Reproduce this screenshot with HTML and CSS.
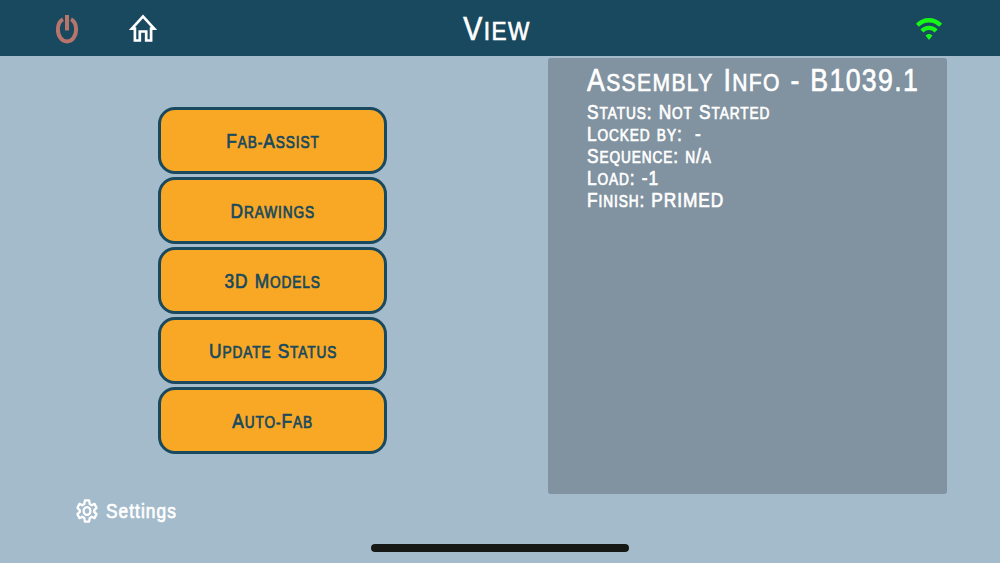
FILE: index.html
```html
<!DOCTYPE html>
<html lang="en">
<head>
  <meta charset="UTF-8">
  <title>View</title>
  <link rel="stylesheet" href="styles.css">
</head>
<body>

  <!-- Top bar -->
  <header class="topbar">
    <div class="topbar-left">
      <svg class="icon-power" viewBox="0 0 24 32" width="24" height="32">
        <path d="M8 6.200C4.400 8 2.900 12 2.900 16.500C2.900 23 6.600 28.500 12 28.500S21.100 23 21.100 16.500C21.100 12 19.600 8 16 6.200"/>
        <path d="M12 2V17.500"/>
      </svg>
      <svg class="icon-home" viewBox="0 0 28 30" width="28" height="30">
        <path d="M2.900 14.600L14 2.400L25.100 14.600H22.100V26.500H17.200V17.500H10.800V26.500H5.900V14.600Z"/>
      </svg>
    </div>
    <h1 class="title"><span class="text">V<small>iew</small></span></h1>
    <div class="topbar-right">
      <svg class="icon-wifi" viewBox="0 0 28 26" width="28" height="26">
        <path d="M2.400 9.200C9 2.600 19 2.600 25.600 9.200"/>
        <path d="M6.900 15C11 10.900 17 10.900 21.100 15"/>
        <path class="dot" d="M10.500 19.600C12.500 17.300 15.500 17.300 17.500 19.600L14 24Z"/>
      </svg>
    </div>
  </header>

  <main class="content">
    <section class="left">
      <!-- Menu buttons -->
      <nav class="menu">
        <button class="btn"><span class="text">F<small>ab-</small>A<small>ssist</small></span></button>
        <button class="btn"><span class="text">D<small>rawings</small></span></button>
        <button class="btn"><span class="text">3D M<small>odels</small></span></button>
        <button class="btn"><span class="text">U<small>pdate</small> S<small>tatus</small></span></button>
        <button class="btn"><span class="text">A<small>uto-</small>F<small>ab</small></span></button>
      </nav>

      <div class="settings">
        <svg class="icon-gear" viewBox="0 0 24 28" width="22" height="28">
          <path d="M9.700 2.500H14.300L15 6.300L17.200 7.700L20.200 6.200L22.400 10.600L19.900 13V15L22.400 17.400L20.200 21.800L17.200 20.300L15 21.700L14.300 25.500H9.700L9 21.700L6.800 20.300L3.800 21.800L1.600 17.400L4.100 15V13L1.600 10.600L3.800 6.200L6.800 7.700L9 6.300Z"/>
          <ellipse cx="12" cy="14" rx="3.700" ry="4.200"/>
        </svg>
        <span class="text">Settings</span>
      </div>
    </section>

    <!-- Assembly details -->
    <section class="info">
      <h2 class="info-title"><span class="text">A<small>ssembly</small> I<small>nfo</small> - B1039.1</span></h2>
      <p><span class="text">S<small>tatus</small>: N<small>ot</small> S<small>tarted</small></span></p>
      <p><span class="text">L<small>ocked</small> <small>by</small>:&nbsp; -</span></p>
      <p><span class="text">S<small>equence</small>: <small>n</small>/<small>a</small></span></p>
      <p><span class="text">L<small>oad</small>: -1</span></p>
      <p><span class="text">F<small>inish</small>: PRIMED</span></p>
    </section>
  </main>

  <div class="home-bar"></div>

</body>
</html>
```
FILE: styles.css
```css
* {
  box-sizing: border-box;
}

body {
  margin: 0;
  height: 563px;
  display: flex;
  flex-direction: column;
  overflow: hidden;
  background-color: #a4bbcc;
  color: #fff;
  font-family: "Liberation Sans", Arial, sans-serif;
  font-size: 20px;
}

h1, h2, p {
  margin: 0;
  font-weight: normal;
}

svg {
  fill: none;
  display: block;
}

/* Narrow lettering, capitals slightly larger than the rest */
.text {
  display: inline-block;
  white-space: nowrap;
  letter-spacing: 0.052em;
  word-spacing: 0.03em;
  transform: scaleX(0.865);
  -webkit-text-stroke: 0.7px currentColor;
}

.text small {
  font-size: 0.79em;
  text-transform: uppercase;
}

/* Top bar */
.topbar {
  height: 56px;
  flex-shrink: 0;
  display: grid;
  grid-template-columns: 1fr auto 1fr;
  align-items: center;
  padding: 0 57px 0 55px;
  background-color: #18495e;
}

.topbar-left {
  display: flex;
  align-items: center;
  gap: 50px;
}

.topbar-right {
  display: flex;
  justify-content: flex-end;
}

.title {
  padding: 2px 3px 0 0;
  font-size: 33px;
  line-height: 54px;
}

.icon-power {
  stroke: #b9746c;
  stroke-width: 4;
}

.icon-home {
  stroke: #fff;
  stroke-width: 2.7;
}

.icon-wifi {
  stroke: #16f716;
  stroke-width: 4.3;
}

.icon-wifi .dot {
  fill: #16f716;
  stroke: none;
}

/* Content */
.content {
  flex: 1;
  display: flex;
  justify-content: space-between;
  padding: 2px 53px 0 76px;
}

.left {
  padding-top: 49px;
}

.menu {
  display: flex;
  flex-direction: column;
  gap: 3px;
  margin-left: 82px;
}

.btn {
  width: 229px;
  height: 67px;
  padding: 2px 0 0 1px;
  border: 3px solid #18495e;
  border-radius: 17px;
  background-color: #f9a825;
  color: #18495e;
  font-family: inherit;
  font-size: 20px;
}

.settings {
  display: flex;
  align-items: center;
  gap: 8px;
  margin-top: 43px;
}

.settings .text {
  letter-spacing: 0.06em;
  padding-top: 1px;
}

.settings .text,
.info .text {
  transform-origin: left;
}

.icon-gear {
  stroke: #fff;
  stroke-width: 2.5;
  stroke-linejoin: round;
}

/* Info panel */
.info {
  width: 399px;
  height: 436px;
  padding: 2px 0 0 39px;
  border-radius: 3px;
  background-color: #8192a0;
  line-height: 21.9px;
}

.info p {
  height: 21.9px;
}

.info-title {
  height: 42px;
  font-size: 31px;
  line-height: 41px;
}

.info-title .text {
  transform: scaleX(0.86);
}

/* Bottom bar */
.home-bar {
  flex-shrink: 0;
  width: 258px;
  height: 8px;
  margin: 0 auto 11px;
  border-radius: 4px;
  background-color: #161816;
}
```
